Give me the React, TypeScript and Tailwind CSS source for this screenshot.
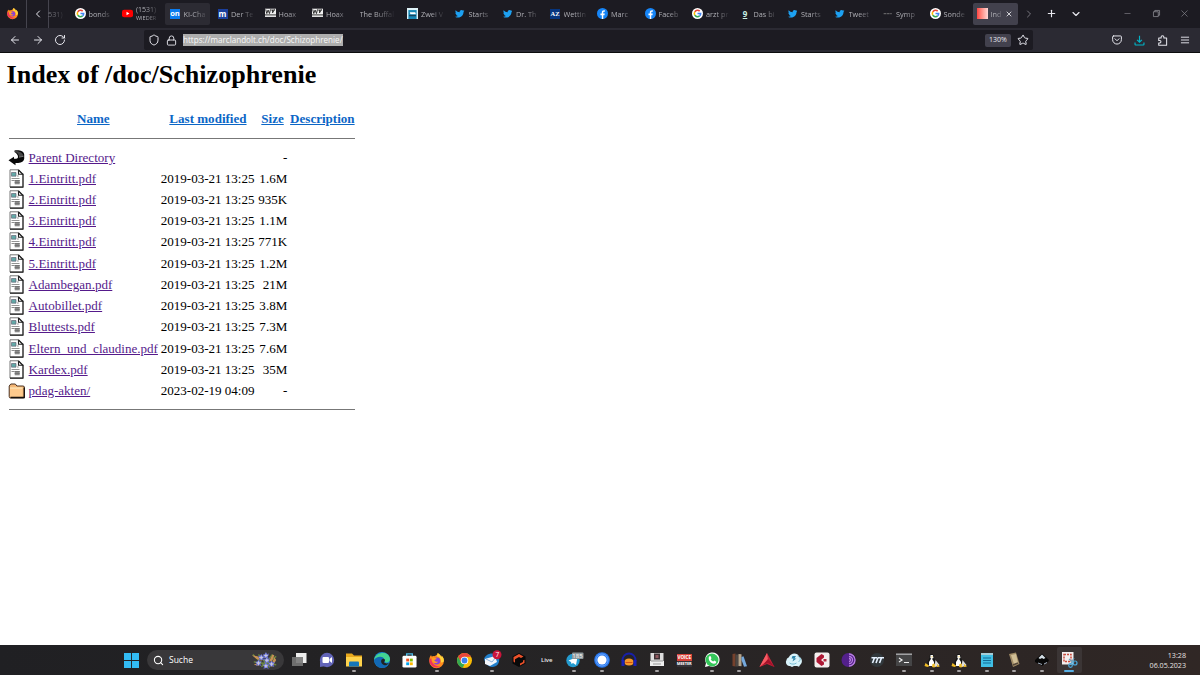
import type { ReactNode } from 'react';
import { ArrowLeft, ArrowRight, RotateCw, Shield, Lock, Star, ChevronLeft, ChevronRight, ChevronDown, Plus, X, Minus, Search } from 'lucide-react';
import { FaTwitter } from 'react-icons/fa';

function Svg({ children, className = 'size-[16px]', box = '0 0 16 16' }: { children: ReactNode; className?: string; box?: string }) {
  return <svg viewBox={box} className={`${className} block shrink-0 overflow-visible`}>{children}</svg>;
}

function Firefox({ className }: { className?: string }) {
  return (
    <Svg className={className}>
      <path d="M8 2.2C9 1.2 9.2.7 9.3 0c3 1.6 3.2 3.3 3.8 4.2.5-.2.4-1 .3-1.5 2 2 2.6 4 2.5 6A7.8 7.8 0 0 1 .3 8.3C.1 6 1 3.5 2.3 2.2c0 .8.2 1.2.6 1.6C3.8 3.4 5 3.1 6 3.4Z" fill="#ff8a1c" />
      <path d="M9.3 0c3 1.6 3.2 3.3 3.8 4.2.5-.2.4-1 .3-1.5 2 2 2.6 4 2.5 6-1 1.2-2 1.7-3 1.3C13 6 11 4 8.5 3.5Z" fill="#ffd43b" />
      <path d="M.3 8.3a7.8 7.8 0 0 0 12 6C8 14.600 3 12.500 2.300 5.500 1 6 .4 7 .3 8.300Z" fill="#f0315b" />
      <circle cx="8.300" cy="8.500" r="3.700" fill="#8a3fd6" />
      <path d="M3.500 5.300c2-.8 3.500 0 5 .8-1 1-2.500.8-2.800 1.700.5 1.500 2.200 1.800 4 1.200-1 2.300-4.500 2.400-5.800.2-.8-1.500-.8-2.700-.4-3.900Z" fill="#ff9d22" />
    </Svg>
  );
}

function Google() {
  return (
    <Svg className="size-[11px]">
      <circle cx="8" cy="8" r="8" fill="#fff" />
      <g fill="none" strokeWidth="2.300">
        <path d="M11.200 4.600A4.600 4.600 0 0 0 4 5.700" stroke="#ea4335" />
        <path d="M4 5.700a4.600 4.600 0 0 0 0 4.600" stroke="#fbbc05" />
        <path d="M4 10.300a4.600 4.600 0 0 0 7 1.200" stroke="#34a853" />
        <path d="M11 11.500A4.600 4.600 0 0 0 12.600 8H8" stroke="#4285f4" />
      </g>
    </Svg>
  );
}

const YouTube = () => <Svg className="size-[11px]"><rect y="2.500" width="16" height="11" rx="3" fill="#f00" /><path d="m6.500 5.500 4.300 2.500-4.300 2.500Z" fill="#fff" /></Svg>;
const Facebook = () => <Svg className="size-[11px]"><circle cx="8" cy="8" r="8" fill="#1685f7" /><path d="M7 16v-5.500H5V8h2V6.500C7 4.300 8.200 3.300 10.200 3.300l1.200.1v2h-1c-1 0-1.300.5-1.300 1.200V8h2.200l-.4 2.500H9.100V16Z" fill="#fff" /></Svg>;
const Twitter = () => <FaTwitter className="size-[9.500px] shrink-0 text-[#1da1f2]" />;
const Hoax = () => (
  <Svg className="size-[11px]">
    <path d="M0 1h16v12H0Z" fill="#eee" />
    <path d="m1 2 1.600 6L4.500 3l2 5L8 2M9 3h5M11 3v4m3-5-3 5" fill="none" stroke="#111" strokeWidth="1.200" />
    <path d="M0 9h16v2H0Z" fill="#666" />
  </Svg>
);

function Letter({ text, className }: { text: string; className: string }) {
  return <span className={`flex size-[10px] shrink-0 items-center justify-center leading-none font-bold ${className}`}>{text}</span>;
}

const Zwei = () => <Svg className="size-[11px]"><path d="M0 0h16v16H0Z" fill="#def2f8" /><path d="M2 3h12v13H2Z" fill="#1687b5" /><path d="M4 6h8l1 3H5Z" fill="#fff" /><path d="M3 10h10v2H3Z" fill="#16435e" /></Svg>;

const tabs: { icon?: ReactNode; label: string; second?: string; state?: string }[] = [
  { icon: <Google />, label: 'bonds' },
  { icon: <YouTube />, label: '(1531)', second: 'WIEDER' },
  { icon: <Letter text="on" className="bg-[#0b7cf0] text-[7.500px] text-white" />, label: 'KI-Cha', state: 'pinned' },
  { icon: <Letter text="m" className="bg-[#1b3f9c] text-[8px] text-white" />, label: 'Der Te' },
  { icon: <Hoax />, label: 'Hoax' },
  { icon: <Hoax />, label: 'Hoax' },
  { label: 'The Buffal' },
  { icon: <Zwei />, label: 'Zwei V' },
  { icon: <Twitter />, label: 'Starts' },
  { icon: <Twitter />, label: 'Dr. Th' },
  { icon: <Letter text="AZ" className="bg-[#06357e] font-['Liberation_Serif',serif] text-[6.500px] text-white" />, label: 'Wettin' },
  { icon: <Facebook />, label: 'Marc' },
  { icon: <Facebook />, label: 'Faceb' },
  { icon: <Google />, label: 'arzt pr' },
  { icon: <Letter text="9" className="text-[8px] text-[#c9f0e2] underline" />, label: 'Das bi' },
  { icon: <Twitter />, label: 'Starts' },
  { icon: <Twitter />, label: 'Tweet' },
  { icon: <Svg className="size-[10px]"><path d="M1 7.500h4.500m1 0h4m1 0H14" stroke="#888" strokeWidth="1.300" /></Svg>, label: 'Symp' },
  { icon: <Google />, label: 'Sonde' },
  { icon: <span className="size-[11px] shrink-0 bg-linear-to-r from-[#ff4242] to-[#ffd7d7]" />, label: 'Ind', state: 'active' },
];

function Tab({ icon, label, second, state }: (typeof tabs)[number]) {
  const tone = state === 'active' ? 'bg-[#42414d]' : state === 'pinned' ? 'bg-[#2c2b33]' : '';
  const textWidth = state === 'active' ? 'w-[12px]' : icon ? 'w-[24px]' : 'w-[36px]';
  const gap = state === 'active' ? 'gap-[2.500px]' : 'gap-[3px]';
  const size = second ? 'text-[7px] leading-[9px]' : 'pt-px text-[7.300px] leading-[10px]';
  return (
    <div className={`mr-[2.500px] flex h-[22px] w-[45px] shrink-0 items-center rounded-[2px] pl-[4.500px] ${gap} ${tone}`}>
      {icon && <span className="flex w-[11px] shrink-0 justify-center">{icon}</span>}
      <span className={`${textWidth} ${size} shrink-0 whitespace-nowrap text-[#b0b0b6] [mask-image:linear-gradient(to_right,black_40%,transparent)]`}>
        <span className="block">{label}</span>
        {second && <span className="block text-[5.500px] leading-[8px]">{second}</span>}
      </span>
      {state === 'active' && <X className="size-[8px] shrink-0 text-[#eeeef2]" strokeWidth={2.5} />}
    </div>
  );
}

function Pocket() {
  return <Svg className="size-[10px]"><path d="M2.500 1.500h11A1.500 1.500 0 0 1 15 3v4.500a7 7 0 0 1-14 0V3a1.500 1.500 0 0 1 1.500-1.500ZM4.800 6 8 9.200 11.200 6" fill="none" stroke="#e5e5ec" strokeWidth="1.600" strokeLinecap="round" /></Svg>;
}

function Browser() {
  return (
    <header className="h-[53px] shrink-0 border-b border-[#0c0c0d] bg-[#2b2a33] text-[#e8e8ef]">
      <div className="flex h-[27.500px] items-center bg-[#1c1b22]">
        <div className="flex h-full w-[27px] shrink-0 items-center justify-center border-r border-[#45444e] pr-[2px]"><Firefox className="size-[11px]" /></div>
        <div className="flex h-full w-[22px] shrink-0 items-center justify-center border-r border-[#45444e]"><ChevronLeft className="size-[12px]" strokeWidth={2} /></div>
        <span className="-ml-px w-[22px] shrink-0 pt-px text-[7.300px] text-[#8a8a91] [mask-image:linear-gradient(to_right,#000b_30%,transparent_80%)]">531)</span>
        {tabs.map((tab, i) => <Tab key={i} {...tab} />)}
        <ChevronRight className="ml-[3px] size-[12px] shrink-0 text-[#77767e]" />
        <Plus className="ml-[10.500px] size-[11px] shrink-0" strokeWidth={2.5} />
        <ChevronDown className="ml-[13.500px] size-[12px] shrink-0" strokeWidth={2.3} />
        <Minus className="ml-[41px] size-[9px] shrink-0 text-[#74737b]" />
        <Svg className="ml-[20.500px] size-[7px]"><path d="M1 4h11v11H1ZM4 4V1h11v11h-3" fill="none" stroke="#9a99a1" strokeWidth="1.600" /></Svg>
        <X className="ml-[19.500px] size-[11px] shrink-0 text-[#85848c]" strokeWidth={1.5} />
      </div>
      <div className="flex h-[25px] items-center">
        <ArrowLeft className="ml-[9px] size-[12px] shrink-0" />
        <ArrowRight className="ml-[10.500px] size-[12px] shrink-0" />
        <RotateCw className="ml-[10.500px] size-[12px] shrink-0" />
        <div className="ml-[78px] flex h-[20px] w-[889px] shrink-0 items-center rounded-[2px] bg-[#1c1b22]">
          <Shield className="ml-[4px] size-[12px] shrink-0" />
          <Lock className="ml-[6px] size-[11px] shrink-0" />
          <span className="ml-[6px] flex h-[12px] w-[160px] items-center bg-[#adadad] pt-px text-[8.080px] leading-none whitespace-nowrap text-[#f8f8f8]">https://marclandolt.ch/doc/Schizophrenie/</span>
          <span className="ml-auto flex h-[13px] w-[26px] items-center justify-center rounded-[2px] bg-[#42414d] pt-px text-[7px]">130%</span>
          <Star className="mr-[4px] ml-[6px] size-[12px]" />
        </div>
        <div className="ml-[79px] flex items-center gap-[12px]">
          <Pocket />
          <Svg className="size-[11px]"><path d="M8 1v9M4.500 7 8 10.500 11.500 7M1.500 11v2.500q0 1 1 1h11q1 0 1-1V11" fill="none" stroke="#00b4c8" strokeWidth="1.700" /></Svg>
          <Svg className="size-[11px]"><path d="M2.500 4.500H6V3a2 2 0 0 1 4 0v1.500h4v10.500H2.500V11.500H4a1.700 1.700 0 0 0 0-3.500H2.500Z" fill="none" stroke="#e5e5ec" strokeWidth="1.500" strokeLinejoin="round" /></Svg>
          <Svg className="size-[10px]"><path d="M1.500 3.500h13M1.500 8h13m-13 4.500h13" stroke="#e8e8ef" strokeWidth="1.500" /></Svg>
        </div>
      </div>
    </header>
  );
}

const PageIcon = () => (
  <Svg className="-ml-px h-[19px] w-[17px]" box="0 0 16 19">
    <path d="M1.500.8H10l4.500 4.500v12.800h-13Z" fill="#fff" stroke="#777" strokeWidth="1" />
    <path d="M10 .8v4.500h4.500v12.800h-13" fill="none" stroke="#222" strokeWidth="1.100" />
    <path d="m10 1 4.500 4.500" stroke="#222" strokeWidth="1.300" />
    <path d="M3 3.500h4.500v3.700H3Z" fill="#62aaa8" stroke="#667" strokeWidth=".7" />
    <path d="M8.500 7h1.800M3 9.500h8" stroke="#888" strokeWidth=".9" />
    <path d="M6.200 11h5v4.300h-5Z" fill="#8b8b8b" />
    <path d="M3 11.500h3M6.200 11.500h5m-5 2h5" stroke="#707070" strokeWidth=".8" />
  </Svg>
);
const BackIcon = () => (
  <Svg className="-ml-px size-[17px]" box="0 0 17 17">
    <path d="M6.500 1.500c4-.8 9.500.2 9.700 4v4.200c-.5 3.500-4 4.500-8.700 4.300v2.200L.5 11.200 6 7.800v2c3 0 4-.5 4-1.800C10 6 8.500 4 6.500 3Z" fill="#080808" />
    <path d="M7 2c4 0 8 1.800 8.500 5.300l-4.300.7C10.800 5 9 3.500 7 2.800Z" fill="#454545" /><path d="m11 8.200 4.500-.9" stroke="#aaa" strokeWidth=".6" />
  </Svg>
);
const FolderIcon = () => (
  <Svg className="-ml-px mt-px h-[16px] w-[18px]" box="0 0 17 16">
    <path d="m.7 3 1.600-2h4.500l1.600 2h6q1.600 0 1.600 1.600v9.200q0 1.200-1.300 1.200H2Q.7 15 .7 13.500Z" fill="#f4b776" stroke="#4c3424" />
    <path d="M1.500 5H14v8.800H1.500Z" fill="#ffca8c" /><path d="M1.500 5H14" stroke="#fff0c7" /><path d="M15.700 4.500v10H2" fill="none" stroke="#17110d" strokeWidth="1.400" />
  </Svg>
);

const files = [
  ['Parent Directory', '', '-'],
  ['1.Eintritt.pdf', '2019-03-21 13:25', '1.6M'],
  ['2.Eintritt.pdf', '2019-03-21 13:25', '935K'],
  ['3.Eintritt.pdf', '2019-03-21 13:25', '1.1M'],
  ['4.Eintritt.pdf', '2019-03-21 13:25', '771K'],
  ['5.Eintritt.pdf', '2019-03-21 13:25', '1.2M'],
  ['Adambegan.pdf', '2019-03-21 13:25', '21M'],
  ['Autobillet.pdf', '2019-03-21 13:25', '3.8M'],
  ['Bluttests.pdf', '2019-03-21 13:25', '7.3M'],
  ['Eltern_und_claudine.pdf', '2019-03-21 13:25', '7.6M'],
  ['Kardex.pdf', '2019-03-21 13:25', '35M'],
  ['pdag-akten/', '2023-02-19 04:09', '-'],
];

function Listing() {
  return (
    <main className="flex-1 pl-[6.500px] font-['Liberation_Serif',serif] text-[13.060px] leading-[15px] text-black">
      <h1 className="pt-[7px] text-[26.100px] leading-[30px] font-bold">Index of /doc/Schizophrenie</h1>
      <div className="ml-[2.500px] w-[346px] pt-[21px]">
        <div className="grid h-[26.500px] grid-cols-[17px_129.500px_94.500px_29.500px_65px] gap-x-[2.600px] text-center font-bold whitespace-nowrap text-[#0b66c6]">
          <span />
          <a className="underline">Name</a><a className="underline">Last modified</a><a className="underline">Size</a><a className="underline">Description</a>
        </div>
        <div className="h-px bg-[#777]" />
        <div className="pt-[8px]">
          {files.map(([name, modified, size], i) => (
            <div key={name} className="grid h-[21.220px] grid-cols-[17px_129.500px_94.500px_29.500px_65px] items-center gap-x-[2.600px] whitespace-nowrap">
              {i === 0 ? <BackIcon /> : i === 11 ? <FolderIcon /> : <PageIcon />}
              <a className="text-[#551a8b] underline">{name}</a>
              <span>{modified}</span>
              <span className="text-right">{size}</span>
            </div>
          ))}
        </div>
        <div className="mt-[7.500px] h-px bg-[#777]" />
      </div>
    </main>
  );
}

const Penguin = () => <Svg><path d="M7.500 2c2 0 2.300 1.700 2.300 3.500l2 4.500-1 4H4L3.500 10 5.700 5.500C5.300 3.500 6 2 7.500 2Z" fill="#161616" /><path d="M6.500 3h2.300l.7 3-2 1-1.200-1ZM7.500 6l2.500 4v4H5v-4Z" fill="#fff" /><path d="m1.500 11 4 3-2 1-3-1Zm7 1 2-.5 2 3-2.500 1-2-.5ZM7 4.500h2l-1 1Z" fill="#f0bc26" /><path d="m11.500 8 4 5-1 1.500h-4Z" fill="#ddd" /><path d="m13 12 3 2.500-3 .5Z" fill="#f0bc26" /></Svg>;

const apps: { id: string; icon: ReactNode; open?: boolean }[] = [
  { id: 'tasks', icon: <Svg><path d="M5 1h10.500v10H5Z" fill="#eee" /><path d="M1 5h11v9H1Z" fill="#777" opacity=".9" /></Svg> },
  { id: 'chat', icon: <Svg><circle cx="8" cy="8" r="7.200" fill="#6264b8" /><path d="M1 15V9l6 5Z" fill="#6264b8" /><rect x="3.500" y="5" width="6.500" height="6" rx="1" fill="#fff" /><path d="m10.500 7 2.500-2v6l-2.500-2Z" fill="#fff" /></Svg> },
  { id: 'files', open: true, icon: <Svg><path d="M0 1.500h6l2 2h8V14H0Z" fill="#e9a91d" /><path d="M0 5h16v9.500H0Z" fill="#ffd34c" /><path d="M4 9.500h8q1 0 1 1v4H3v-4q0-1 1-1Z" fill="#1677b8" /></Svg> },
  { id: 'edge', icon: <Svg><circle cx="8" cy="8" r="8" fill="#1686d0" /><path d="M0 8C1 0 15-2 16 7c0 3-3 4-5 3 1-4-6-6-11-2Z" fill="#42d392" /><path d="M0 8c3-4 9-4 10-1-4 0-4 6 4 6-3 5-12 4-14-5Z" fill="#1268b5" /><path d="M8.500 7C12 6 11 10 10 10c1 2 4 1.500 5 .8-1 2-3 3-5 2.200-3-1-4-5-1.500-6Z" fill="#202222" /></Svg> },
  { id: 'store', icon: <Svg className="size-[15px]"><path d="M5 4V1h6v3" fill="none" stroke="#4bbce8" strokeWidth="1.400" /><rect x=".5" y="3" width="15" height="12.500" rx="1.500" fill="#fff" /><path d="M4.500 6H7.600v3H4.500Z" fill="#f25022" /><path d="M8.400 6h3.100v3H8.400Z" fill="#7fba00" /><path d="M4.500 10h3.100v3H4.500Z" fill="#00a4ef" /><path d="M8.400 10h3.100v3H8.400Z" fill="#ffb900" /></Svg> },
  { id: 'firefox', open: true, icon: <Firefox className="size-[15px]" /> },
  { id: 'chrome', icon: <Svg className="size-[15px]"><circle cx="8" cy="8" r="8" fill="#f9bb05" /><path d="M1.100 4A8 8 0 0 1 15 4H8l-3.500 6Z" fill="#e8453c" /><path d="M1.100 4 4.500 10l3.500 2-2 3.800A8 8 0 0 1 1.100 4Z" fill="#33a852" /><circle cx="8" cy="8" r="4" fill="#fff" /><circle cx="8" cy="8" r="3.100" fill="#3a80ed" /></Svg> },
  { id: 'mail', open: true, icon: <Svg><path d="M0 7C2 1 11-1 15 6c1 5-2 9-7 9-4 0-7-4-8-8Z" fill="#217fcb" /><path d="m1 7 10-3 2 6-7 4-5-2Z" fill="#f2f5fa" /><path d="m2 7 6 3 4-5" fill="none" stroke="#8ab1da" /><circle cx="13" cy="2.800" r="4.500" fill="#ca143b" /><text x="11.400" y="5.300" fill="#fff" fontSize="6.500">7</text></Svg> },
  { id: 'cube', icon: <Svg><path d="m8 1 6.500 3.500v7L8 15l-6.500-3.500v-7Z" fill="#090909" /><path d="m3.500 4.500 4.500-2.500 4.500 2.500-2.500 1.500-2-1-4 2.300v3.500L2.500 9.500V5Zm8.500 4 1.500-.8v3.300L9 13.500v-2l3-1.500Z" fill="#ed522b" /></Svg> },
  { id: 'live', icon: <span className="text-[6px] font-semibold text-[#eee]">Live</span> },
  { id: 'telegram', open: true, icon: <Svg><circle cx="7" cy="8.500" r="6.700" fill="#249bcf" /><path d="m2.500 8.500 9-3.500-1.500 8-3-2-1.500 1-.5-2Z" fill="#fff" /><rect x="6" y=".5" width="11.500" height="6.500" rx="1" fill="#8c979b" /><text x="6.300" y="5.900" fill="#fff" fontSize="6">185</text></Svg> },
  { id: 'signal', open: true, icon: <Svg><circle cx="8" cy="8" r="7.800" fill="#2878ee" /><circle cx="8" cy="8" r="6" fill="none" stroke="#7fb3ff" strokeWidth=".7" /><circle cx="8" cy="8" r="4.600" fill="#fff" /></Svg> },
  { id: 'audio', icon: <Svg><path d="M1.500 9C1-1 15-1 14.500 9" fill="none" stroke="#1820a9" strokeWidth="1.800" /><ellipse cx="8" cy="10" rx="4.500" ry="3.500" fill="#f7972a" /><path d="M4.500 10.500h7" stroke="#cf4b12" strokeWidth=".9" /><path d="M.5 8h3v6h-3Zm12 0h3v6h-3Z" fill="#1b22b8" /></Svg> },
  { id: 'recorder', open: true, icon: <Svg><path d="M1.500 1h13v8h-13Z" fill="#ddd" /><path d="M1 9h14v5H1Z" fill="#eee" /><path d="M5 1.500h6v6H5Z" fill="#3c3033" /><path d="M6.500 3h3v3h-3Z" fill="#915a60" /><path d="M2 9h12M4 12h8" stroke="#999" /></Svg> },
  { id: 'voice', icon: <span className="block w-[15px] text-center text-[4.600px] leading-[7px] font-bold text-white"><span className="block bg-[#d84238]">VOICE</span><span className="block bg-[#343238] text-[4px] leading-[6px] tracking-[-.1px]">MEETER</span></span> },
  { id: 'whatsapp', open: true, icon: <Svg><path d="M1 15 2 11a7.200 7.200 0 1 1 3 3Z" fill="#fff" /><circle cx="8" cy="8" r="6.500" fill="#35c65a" /><path d="M5 4.500 6.500 4l1 2.200-.8 1q1 1.700 2.500 2.400l1.100-1 2 1.200-.4 1.500c-4 2-8.400-3-6.900-6.800Z" fill="#fff" /></Svg> },
  { id: 'books', open: true, icon: <Svg><path d="m1.500 2 3-.5v13L1.500 14Z" fill="#75412c" /><path d="M4.500 2.500h3v12h-3Z" fill="#4c4743" /><path d="m7.500 2 3 .3v12l-3-.3Z" fill="#b5a48b" /><path d="m10.500 5 2-.8 3.500 10-3 .5L10.500 8Z" fill="#75a9dd" /></Svg> },
  { id: 'red', icon: <Svg><path d="m8 1 7.500 14L8 12 .5 15Z" fill="#c62238" /><path d="m8 1 1 7-8.500 7Z" fill="#f65b63" /><path d="m9 7 2 2 4.500 6L9 11l-5 2Z" fill="#a3122a" /></Svg> },
  { id: 'cloud', icon: <Svg><path d="M3 14a4 4 0 0 1-2.500-6C.5 6 3 5.500 3 5c2-5 9-4.500 10-.5 4 2 3.500 7 1 8.500l-1 1.800-2-.8H8l-2 1-2-1Z" fill="#d9f3fa" /><path d="M3.500 11c2 1.500 5 1.500 7 0M11.500 4c4 2 3 4 1 6" stroke="#79bfd6" fill="none" /><path d="M6.500 4H10L8.500 6.500h2l-4 3 1-3h-2Z" fill="#2d84a9" /></Svg> },
  { id: 'capture', icon: <Svg><rect x=".5" y=".5" width="15" height="15" rx="2" fill="#f4eeee" /><path d="M7.500 2 10 3.500v2L7 8l3 2.500v2L7.500 14 2.500 10V6Z" fill="#ae1835" /><path d="M9.500 7h3v2.500h-3Z" fill="#b22b43" /></Svg> },
  { id: 'tor', icon: <Svg><circle cx="7.500" cy="8" r="7" fill="#53208b" /><path d="M8 2a6 6 0 0 1 0 12m0-9.500a3.500 3.500 0 0 1 0 7m0-5a1.500 1.500 0 0 1 0 3" fill="none" stroke="#b981e0" strokeWidth="1.300" /></Svg> },
  { id: 'traktor', icon: <Svg><circle cx="8" cy="8" r="7" fill="#31383c" /><path d="M2.500 5.800h5.500M5.500 5.800 3.500 11M9 5.500 7 11m2-5.200h6M12.500 5.800l-2 5.200" stroke="#e5f1ff" strokeWidth="1.600" fill="none" /></Svg> },
  { id: 'terminal', open: true, icon: <Svg><path d="M0 1.500h16v12.500H0Z" fill="#454546" /><path d="M0 1.500h16v1.500H0Z" fill="#a1a1a3" /><path d="m3 6 3 2-3 2m5 .5h5" stroke="#eee" strokeWidth="1.200" fill="none" /></Svg> },
  { id: 'linux1', open: true, icon: <Penguin /> },
  { id: 'linux2', open: true, icon: <Penguin /> },
  { id: 'notes', open: true, icon: <Svg><path d="M2 1.500h12V15H2Z" fill="#40bee4" /><path d="M2 1h12v2H2Z" fill="#a5cdd8" /><path d="M4 6h8M4 8.500h8M4 11h8" stroke="#126b96" /></Svg> },
  { id: 'scroll', open: true, icon: <Svg><path d="m3 2 7-1.500L13.500 12 7 15Z" fill="#a08b65" /><path d="m5 3 5-1 2 9-4 1Z" fill="#d1bf96" /><path d="m7 13 5-2" stroke="#544638" strokeWidth="1.500" fill="none" /></Svg> },
  { id: 'inkscape', open: true, icon: <Svg><path d="m8 1.500 7 6.500-1 2-3 1.500L8 14l-4-2.500L1 10V8Z" fill="#080808" /><path d="M8 2.500 11.500 6 9.500 7 8 6 6 7 4.500 6Z" fill="#d4dee5" /><path d="m4 11 4 1.500m2-.5 3-1.500" stroke="#a3afc0" fill="none" /></Svg> },
];

const Flowers = () => (
  <Svg className="h-[17px] w-[28px]" box="0 0 30 17">
    <path d="m2 2 12 12L23 2M8 2l12 14m-9-1 16-11M3 10l24 3" stroke="#6c863c" strokeWidth="1.500" fill="none" />
    <path d="m1 3 6 1 5 5-6-2ZM20 8l3-6 2 1-3 8ZM25 5l2 3-4 7h-2ZM3 13l8-3-3 4Z" fill="#c79255" />
    {[[11, 5], [16, 3], [8, 11], [17, 8], [22, 12], [16, 14]].map(([x, y]) => (
      <g key={x * 20 + y} transform={`translate(${x} ${y})`}><path d="m0-3.500 1.300 2L3.500-2 2 1l1 2.500L0 2.300-2.500 3.500l.5-3L-3.500-1l2.200-.5Z" fill="#666fc9" /><path d="m0-2.500.7 2L3 0 1 1 0 3-1 1-3 0l2.300-.5Z" fill="#b8bbf4" /><circle r=".6" fill="#eee09a" /></g>
    ))}
  </Svg>
);

function Taskbar() {
  return (
    <footer className="flex h-[30px] shrink-0 items-center bg-linear-to-r from-[#202023] via-[#262425] to-[#302725]">
      <Svg className="ml-[124px] size-[15px]"><path d="M0 0h7.500v7.500H0Zm8.500 0H16v7.500H8.500ZM0 8.500h7.500V16H0Zm8.500 0H16V16H8.500Z" fill="#32bbf4" /></Svg>
      <div className="ml-[8px] flex h-[20px] w-[137px] shrink-0 items-center rounded-full bg-[#39383a] pr-[5px] pl-[6px] text-[8.500px] text-white">
        <Search className="mr-[5px] size-[11px]" strokeWidth={2.3} /><span>Suche</span><span className="ml-auto"><Flowers /></span>
      </div>
      <div className="ml-[1.500px] flex h-full shrink-0 items-center">
        {apps.map(({ id, icon, open }) => (
          <div key={id} className="relative flex h-full w-[27.500px] items-center justify-center">
            {icon}{open && <span className="absolute bottom-[3px] h-[2px] w-[4px] rounded-full bg-[#a6a3a4]" />}
          </div>
        ))}
        <div className="relative ml-px flex h-[26px] w-[25px] items-center justify-center rounded-[2px] bg-[#3b3535]">
          <Svg><path d="M1 0h11.500v12.500H1Z" fill="#f3eeee" /><path d="M3 2.500h7v7H3Z" fill="none" stroke="#c94c3d" strokeWidth="1.500" strokeDasharray="2 1" /><path d="m8 7 5 4m0-5-4 7" stroke="#6fa5c0" strokeWidth="1.300" /><circle cx="14" cy="11" r="2" fill="none" stroke="#4aaade" strokeWidth="1.200" /><circle cx="9.500" cy="13.500" r="1.800" fill="none" stroke="#4aaade" strokeWidth="1.200" /></Svg>
          <span className="absolute bottom-[1px] h-[2px] w-[10px] rounded-full bg-[#57afe4]" />
        </div>
      </div>
      <div className="mr-[14px] ml-auto text-right text-[7.150px] leading-[10px] text-[#e7e3e3]">13:28<br />06.05.2023</div>
    </footer>
  );
}

export default function App() {
  return (
    <div className="flex h-[675px] w-[1200px] flex-col overflow-hidden bg-white font-['Open_Sans',sans-serif]">
      <Browser />
      <Listing />
      <Taskbar />
    </div>
  );
}
